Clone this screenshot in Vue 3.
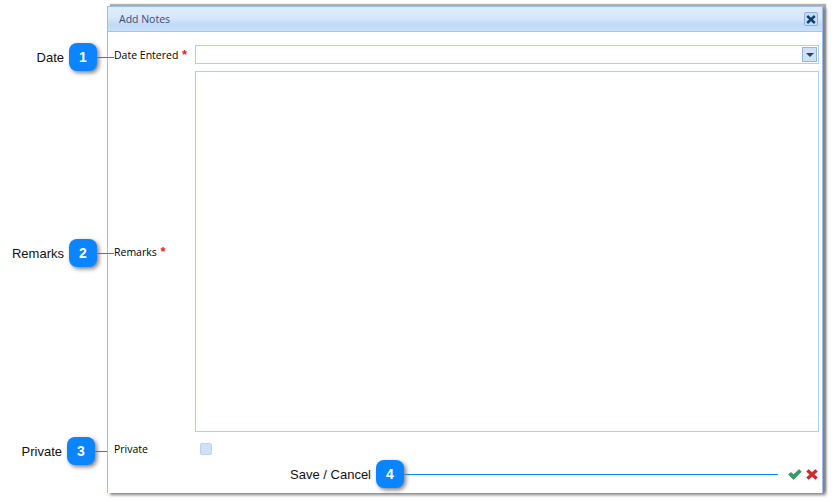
<script setup>
const callouts = [
  { n: 1, label: 'Date', top: 43, left: 69, line: 17 },
  { n: 2, label: 'Remarks', top: 239, left: 69, line: 17 },
  { n: 3, label: 'Private', top: 437, left: 67, line: 12 },
  { n: 4, label: 'Save / Cancel', top: 460, left: 376, line: 374 },
]
</script>

<template>
  <div class="page">
    <div class="dialog">
      <div class="title-bar">
        <span class="title">Add Notes</span>
        <button class="close-btn">
          <svg width="10" height="9" viewBox="0 0 10 9">
            <path d="M1.2 1 L8.8 8 M8.8 1 L1.2 8" stroke="#0f3f66" stroke-width="2.4" fill="none" />
          </svg>
        </button>
      </div>

      <div class="form">
        <label class="field-label">Date Entered <span class="req">*</span></label>
        <div class="date-input">
          <span class="drop-btn"><i class="caret"></i></span>
        </div>

        <label class="field-label">Remarks <span class="req">*</span></label>
        <div class="remarks"></div>

        <label class="field-label">Private</label>
        <div class="check-cell"><span class="check"></span></div>
      </div>

      <div class="actions">
        <svg width="14" height="11" viewBox="0 0 14 11">
          <path d="M0.6 5.6 L3 3.4 L5.6 5.8 L11 0.6 L13.4 2.8 L5.6 10.4 Z" fill="#3a9a68" stroke="#2a7a50" stroke-width="0.6" />
        </svg>
        <svg width="12" height="11" viewBox="0 0 12 11">
          <path d="M0.6 2.6 L2.6 0.6 L6 3.4 L9.4 0.6 L11.4 2.6 L8.2 5.5 L11.4 8.4 L9.4 10.4 L6 7.6 L2.6 10.4 L0.6 8.4 L3.8 5.5 Z" fill="#d0282c" stroke="#a82024" stroke-width="0.5" />
        </svg>
      </div>
    </div>

    <div
      v-for="c in callouts"
      :key="c.n"
      class="callout"
      :style="{ top: c.top + 'px', left: c.left + 'px' }"
    >
      <span class="callout-label">{{ c.label }}</span>
      <span class="badge">{{ c.n }}</span>
      <span class="leader" :style="{ width: c.line + 'px' }"></span>
    </div>
  </div>
</template>

<style>
body {
  margin: 0;
  background: #fff;
}
</style>

<style scoped>
.page {
  position: relative;
  width: 833px;
  height: 501px;
  overflow: hidden;
  background: #fff;
  font-family: "Open Sans", "Liberation Sans", sans-serif;
}

.dialog {
  position: absolute;
  left: 107px;
  top: 6px;
  width: 716px;
  height: 487px;
  box-sizing: border-box;
  display: flex;
  flex-direction: column;
  background: #fff;
  border: 1px solid #9ebfec;
  border-bottom: 0;
  box-shadow: 3px 2px 3px 0 #808080, 3px -2px 1px 0 #b0b0b0;
}

.title-bar {
  height: 25px;
  flex: none;
  box-sizing: border-box;
  padding: 0 4px 0 11px;
  display: flex;
  align-items: center;
  justify-content: space-between;
  border-bottom: 1px solid #a5c4ec;
  background: linear-gradient(#e0ecfd 0%, #d8e7fb 45%, #bfd9f7 75%, #cbe1f9 100%);
}

.title {
  font-size: 10.5px;
  color: #3b4a78;
}

.close-btn {
  width: 14px;
  height: 14px;
  padding: 0;
  display: flex;
  align-items: center;
  justify-content: center;
  border: 1px solid #8eb0dc;
  border-radius: 2px;
  background: #c5daf5;
}

.form {
  display: grid;
  grid-template-columns: 87px 624px;
  grid-template-rows: 19px 361px 20px;
  row-gap: 7px;
  padding-top: 13px;
  align-items: center;
}

.field-label {
  padding-left: 6px;
  font-size: 10.5px;
  line-height: 14px;
  color: #000;
}

.req {
  margin-left: 1px;
  color: #e3242b;
  font-size: 13px;
  font-weight: 700;
  font-family: "Liberation Sans", sans-serif;
}

.date-input {
  height: 19px;
  box-sizing: border-box;
  border: 1px solid #b5cdec;
  display: flex;
  align-items: center;
  justify-content: flex-end;
  padding-right: 1px;
}

.drop-btn {
  width: 15px;
  height: 15px;
  box-sizing: border-box;
  border: 1px solid #93b5e0;
  background: #cfe0f7;
  display: flex;
  align-items: center;
  justify-content: center;
}

.caret {
  width: 0;
  height: 0;
  border-left: 4px solid transparent;
  border-right: 4px solid transparent;
  border-top: 4px solid #2f4358;
}

.remarks {
  height: 361px;
  box-sizing: border-box;
  border: 1px solid #b5cdec;
}

.check-cell {
  padding-left: 5px;
}

.check {
  display: block;
  width: 12px;
  height: 12px;
  box-sizing: border-box;
  border: 1px solid #b9d2f0;
  border-radius: 2px;
  background: #cfe1f7;
}

.actions {
  display: flex;
  justify-content: flex-end;
  align-items: center;
  gap: 4px;
  padding-right: 4px;
  margin-top: 10px;
}

.callout {
  position: absolute;
  display: flex;
  align-items: center;
  height: 28px;
}

.callout-label {
  position: absolute;
  right: 100%;
  margin-right: 5px;
  white-space: nowrap;
  font-size: 13px;
  color: #111;
  font-family: "Liberation Sans", sans-serif;
}

.badge {
  width: 28px;
  height: 28px;
  flex: none;
  display: flex;
  align-items: center;
  justify-content: center;
  border-radius: 8px;
  background: #0a84ff;
  color: #fff;
  font-size: 14px;
  font-weight: 700;
  font-family: "Liberation Sans", sans-serif;
  box-shadow: 2px 2px 4px rgba(0, 0, 0, 0.5);
}

.leader {
  height: 1px;
  background: #0a84ff;
}
</style>
